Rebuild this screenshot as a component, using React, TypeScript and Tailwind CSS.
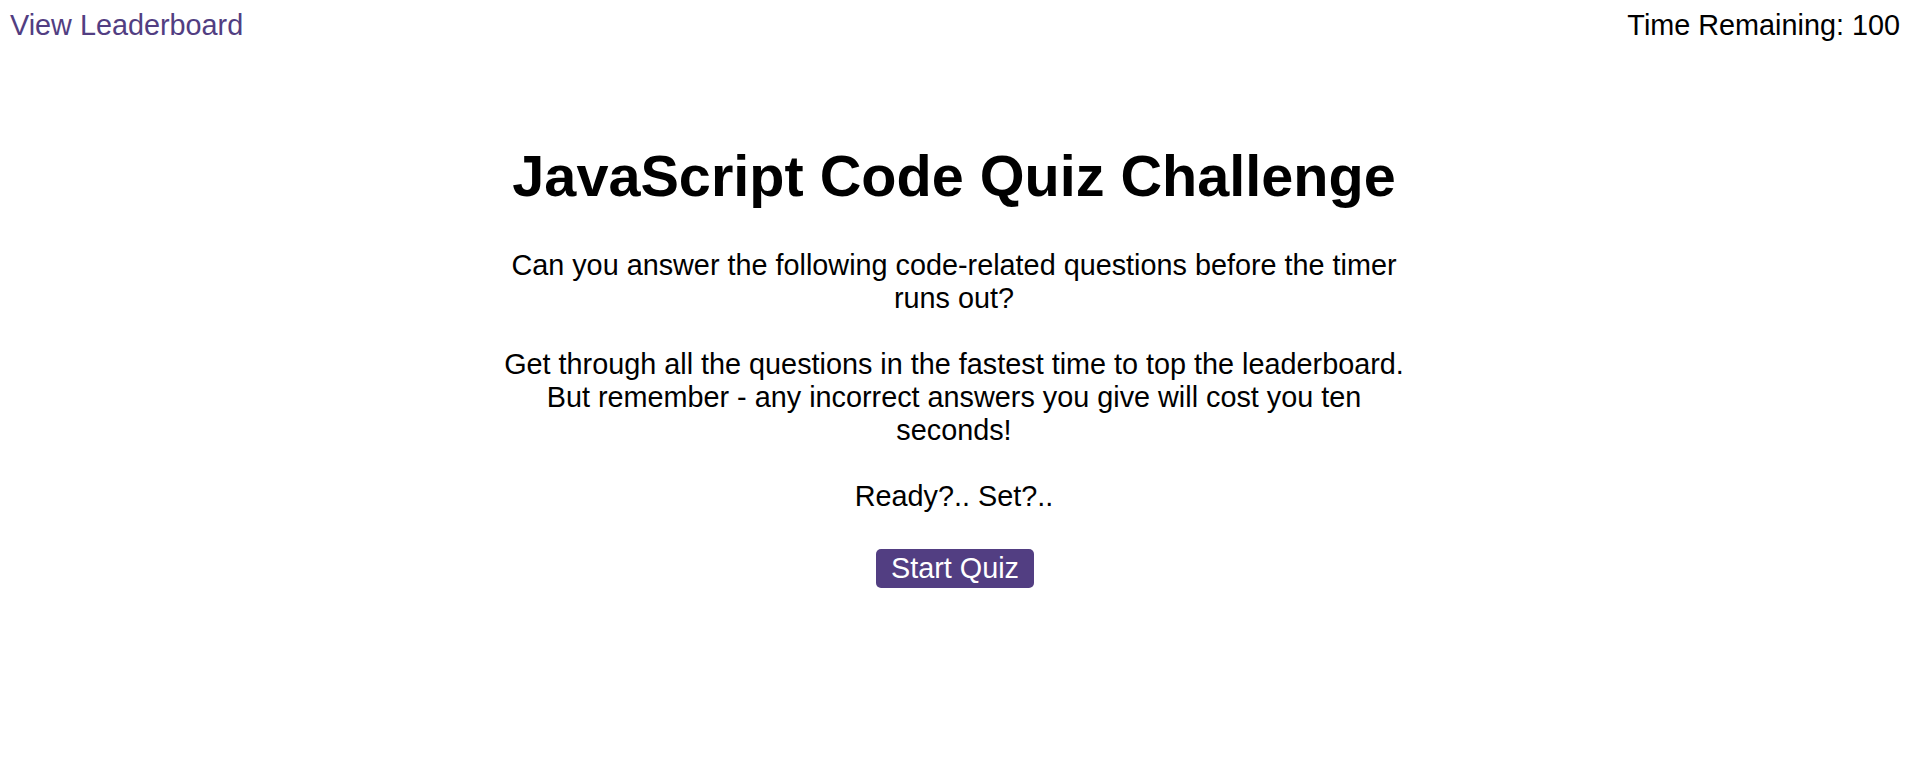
export default function App() {
  return (
    <div className="min-h-[758px] bg-white text-black font-['Liberation_Sans',Arial,sans-serif]">
      <header className="flex justify-between items-start pt-[9px] pl-[10px] pr-[8px] text-[28.8px] leading-[33px]">
        <a href="#" className="text-[#523e82]">View Leaderboard</a>
        <span>Time Remaining: 100</span>
      </header>

      <main className="w-[912px] mx-auto text-center">
        <h1 className="mt-[101px] text-[57.6px] font-bold leading-[66px]">
          JavaScript Code Quiz Challenge
        </h1>
        <p className="mt-[40px] text-[28.8px] leading-[33px]">
          Can you answer the following code-related questions before the timer runs out?
          <br />
          <br />
          Get through all the questions in the fastest time to top the leaderboard. But remember - any incorrect answers you give will cost you ten seconds!
          <br />
          <br />
          Ready?.. Set?..
        </p>
        <button className="mt-[36px] ml-[2px] bg-[#523e82] text-white text-[28.8px] leading-[33px] px-[15px] py-[3px] rounded-[5px]">
          Start Quiz
        </button>
      </main>
    </div>
  );
}
